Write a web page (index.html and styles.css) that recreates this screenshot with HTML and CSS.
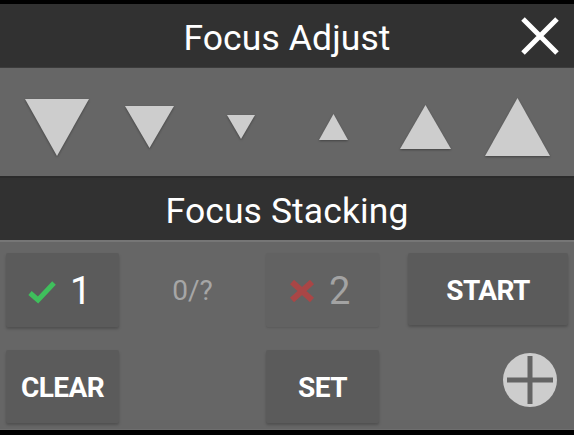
FILE: index.html
```html
<!DOCTYPE html>
<html>
<head>
<meta charset="utf-8">
<link rel="stylesheet" href="styles.css">
</head>
<body>
<div class="app">
  <header class="title-bar">
    <span></span>
    <h1 class="title">Focus Adjust</h1>
    <button class="close" aria-label="Close">
      <svg width="40" height="40" viewBox="0 0 40 40"><path d="M3 3 L37 37 M37 3 L3 37" stroke="#fff" stroke-width="5" stroke-linecap="butt"/></svg>
    </button>
  </header>

  <div class="focus-panel">
    <button class="tri"><svg width="64" height="57" viewBox="0 0 64 57"><polygon points="0,0 64,0 32,57"/></svg></button>
    <button class="tri"><svg width="49" height="42" viewBox="0 0 49 42"><polygon points="0,0 49,0 24.5,42"/></svg></button>
    <button class="tri"><svg width="28" height="24" viewBox="0 0 28 24"><polygon points="0,0 28,0 14,24"/></svg></button>
    <button class="tri"><svg width="29" height="26" viewBox="0 0 29 26"><polygon points="14.5,0 29,26 0,26"/></svg></button>
    <button class="tri"><svg width="51" height="44" viewBox="0 0 51 44"><polygon points="25.5,0 51,44 0,44"/></svg></button>
    <button class="tri"><svg width="65" height="58" viewBox="0 0 65 58"><polygon points="32.5,0 65,58 0,58"/></svg></button>
  </div>

  <header class="title-bar second">
    <span></span>
    <h2 class="title">Focus Stacking</h2>
    <span></span>
  </header>

  <div class="stack-panel">
    <button class="btn count">
      <svg class="check" width="28" height="24" viewBox="0 0 28 24"><path d="M2 13 L10 20 L26 3" fill="none" stroke="#3fbf5c" stroke-width="5"/></svg>
      <span class="num">1</span>
    </button>
    <div class="progress">0/?</div>
    <button class="btn count disabled">
      <svg class="cross" width="26" height="22" viewBox="0 0 26 22"><path d="M3 2 L23 20 M23 2 L3 20" stroke="#a94646" stroke-width="6"/></svg>
      <span class="num">2</span>
    </button>
    <button class="btn start">START</button>

    <button class="btn clear">CLEAR</button>
    <span></span>
    <button class="btn set">SET</button>
    <button class="plus" aria-label="Add">
      <svg width="54" height="54" viewBox="0 0 54 54"><circle cx="27" cy="27" r="27" fill="#cdcdcd"/><path d="M27 3 V51 M4 27 H50" stroke="#646464" stroke-width="5"/></svg>
    </button>
  </div>
</div>
</body>
</html>
```

FILE: styles.css
```css
html, body {
  margin: 0;
  padding: 0;
  background: #000;
}

.app {
  width: 574px;
  height: 435px;
  padding-top: 4px;
  box-sizing: border-box;
  font-family: Roboto, "Noto Sans", sans-serif;
  color: #fff;
}

button {
  font-family: inherit;
  border: 0;
  padding: 0;
  margin: 0;
  background: none;
  color: inherit;
}

.title-bar {
  height: 64px;
  background: #313131;
  display: grid;
  grid-template-columns: 1fr auto 1fr;
  align-items: center;
  border-bottom: 1px solid #3c3c3c;
  box-sizing: border-box;
}

.title {
  margin: 0;
  font-size: 35.5px;
  font-weight: 400;
  line-height: 1;
  padding-top: 6px;
  letter-spacing: 0.1px;
}

.close {
  justify-self: end;
  margin-right: 14px;
  width: 40px;
  height: 40px;
  display: flex;
}

.focus-panel {
  height: 108px;
  background: #666;
  display: grid;
  grid-template-columns: repeat(6, 92px);
  padding: 10px 11px 0;
  box-sizing: border-box;
  align-items: center;
  justify-items: center;
}

.tri {
  display: flex;
  align-items: center;
  justify-content: center;
}

.tri svg {
  fill: #cdcdcd;
  filter: drop-shadow(0 1px 1px rgba(0,0,0,0.35));
}

.title-bar.second {
  height: 66px;
  border-top: 2px solid #2b2b2b;
  border-bottom: 2px solid #767676;
}

.title-bar.second .title {
  padding-top: 6px;
}

.stack-panel {
  height: 188px;
  background: #666;
  box-sizing: border-box;
  padding: 11px 6px 0;
  display: grid;
  grid-template-columns: 113px 113px 113px 172px;
  grid-template-rows: 74px 73px;
  column-gap: 17px;
  row-gap: 23px;
  border-bottom: 1px solid #6e6e6e;
}

.btn {
  background: #5b5b5b;
  border-radius: 2px;
  box-shadow: 0 2px 3px rgba(0,0,0,0.22);
  color: #fff;
  font-size: 28px;
  font-weight: 700;
  letter-spacing: -0.6px;
  display: flex;
  align-items: center;
  justify-content: center;
  padding-top: 2px;
  box-sizing: border-box;
}

.btn.count {
  gap: 14px;
  padding-right: 6px;
}

.num {
  font-size: 38px;
  font-weight: 400;
  line-height: 1;
}

.check {
  margin-top: 2px;
}

.btn.disabled {
  background: #626262;
  box-shadow: 0 1px 2px rgba(0,0,0,0.12);
}

.btn.disabled .num {
  color: #a3a3a3;
}

.progress {
  display: flex;
  align-items: center;
  justify-content: center;
  font-size: 28px;
  color: #a6a6a6;
}

.start {
  justify-self: end;
  width: 160px;
  height: 72px;
}

.plus {
  justify-self: end;
  align-self: start;
  margin-top: 3px;
  margin-right: 11px;
  width: 54px;
  height: 54px;
  display: flex;
}
```
